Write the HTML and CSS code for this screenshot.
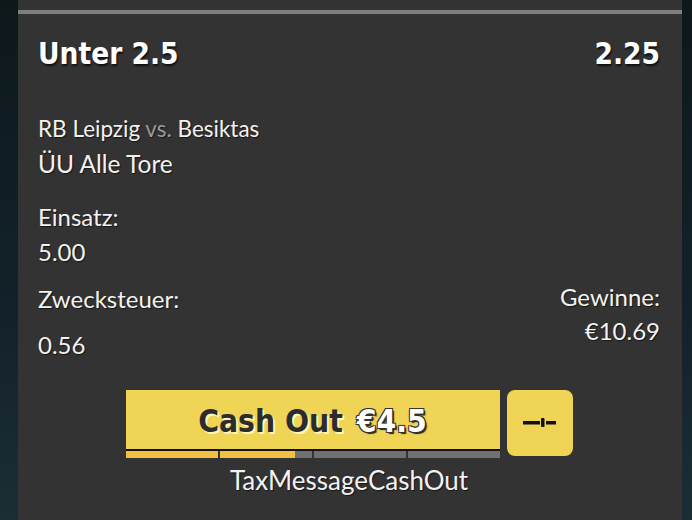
FILE: index.html
```html
<!DOCTYPE html>
<html lang="de">
<head>
<meta charset="utf-8">
<link rel="stylesheet" href="styles.css">
</head>
<body>
<div class="card">
  <div class="topline"></div>
  <div class="content">
    <div class="header">
      <span class="sel">Unter 2.5</span>
      <span class="odds">2.25</span>
    </div>
    <div class="event">RB Leipzig <span class="vs">vs.</span> Besiktas</div>
    <div class="market">ÜU Alle Tore</div>
    <div class="label l-stake">Einsatz:</div>
    <div class="value v-stake">5.00</div>
    <div class="row">
      <div class="col left">
        <div class="label l-tax">Zwecksteuer:</div>
        <div class="value v-tax">0.56</div>
      </div>
      <div class="col right">
        <div class="label l-win">Gewinne:</div>
        <div class="value v-win">€10.69</div>
      </div>
    </div>
    <div class="cashout">
      <div class="cash-main">
        <div class="cash-btn"><span class="c-dark">Cash Out</span><span class="c-amt">€4.5</span></div>
        <div class="progress">
          <div class="seg"><div class="fill full"></div></div>
          <div class="seg"><div class="fill part"></div></div>
          <div class="seg"></div>
          <div class="seg"></div>
        </div>
      </div>
      <div class="slider-btn">
        <svg width="34" height="10" viewBox="0 0 34 10">
          <rect x="0" y="3" width="17" height="3.5" fill="#111"/>
          <rect x="18" y="0" width="3.5" height="9" rx="1" fill="#111"/>
          <rect x="23" y="3" width="10" height="3.5" fill="#111"/>
        </svg>
      </div>
    </div>
    <div class="taxmsg">TaxMessageCashOut</div>
  </div>
</div>
</body>
</html>
```
FILE: styles.css
```css
html, body {
  margin: 0;
  padding: 0;
}
body {
  width: 692px;
  height: 520px;
  overflow: hidden;
  background: linear-gradient(180deg, #0d181b 0%, #13222a 60%, #1c2d34 100%);
  font-family: "Lato", "DejaVu Sans", sans-serif;
  color: #f2f2f2;
}
.card {
  margin-left: 18px;
  width: 664px;
  height: 520px;
  background: #333333;
  padding-top: 10px;
  box-sizing: border-box;
}
.topline {
  height: 4px;
  background: #7f7f7f;
}
.content {
  padding: 0 22px 0 20px;
  text-shadow: 1px 1px 1px rgba(0,0,0,0.6);
}
.header {
  display: flex;
  justify-content: space-between;
  font-family: "DejaVu Sans Condensed", "DejaVu Sans", sans-serif;
  font-weight: bold;
  font-size: 29.5px;
  line-height: 34px;
  margin-top: 23px;
  color: #fff;
  text-shadow: 1px 2px 2px rgba(0,0,0,0.7);
}
.event {
  font-size: 22.5px;
  line-height: 28px;
  margin-top: 44px;
}
.vs {
  color: #9a9a9a;
}
.market {
  font-size: 24.5px;
  line-height: 30px;
  margin-top: 6px;
}
.label, .value {
  font-size: 24px;
  line-height: 28px;
}
.l-stake { margin-top: 24px; }
.v-stake { margin-top: 7px; }
.row {
  display: flex;
  justify-content: space-between;
  margin-top: 17px;
}
.left { padding-top: 2px; }
.v-tax { margin-top: 18px; }
.right { text-align: right; }
.v-win { margin-top: 6px; }
.cashout {
  display: flex;
  justify-content: center;
  gap: 7px;
  margin-top: 31px;
}
.cash-main {
  width: 374px;
}
.cash-btn {
  height: 61px;
  background: #f0d455;
  border-bottom: 2px solid #111;
  display: flex;
  align-items: center;
  justify-content: center;
  font-family: "DejaVu Sans Condensed", "DejaVu Sans", sans-serif;
  font-weight: bold;
  font-size: 31.5px;
  gap: 14px;
  padding-top: 3px;
  box-sizing: border-box;
  text-shadow: none;
}
.c-dark {
  color: #2c2c2c;
  text-shadow: 2px 2px 0 #fff6c0;
}
.c-amt {
  color: #ffffff;
  text-shadow: 1px 1px 0 #333, -1px -1px 0 #333, 1px -1px 0 #333, -1px 1px 0 #333, 2px 2px 1px #222;
}
.progress {
  display: flex;
  gap: 2px;
  height: 7px;
}
.seg {
  flex: 1;
  background: #707070;
}
.fill {
  height: 100%;
  background: #f2c043;
}
.fill.full { width: 100%; }
.fill.part { width: 82%; }
.slider-btn {
  width: 66px;
  height: 66px;
  border-radius: 8px;
  background: #f0d455;
  display: flex;
  align-items: center;
  justify-content: center;
}
.taxmsg {
  text-align: center;
  font-size: 26px;
  line-height: 30px;
  margin-top: 7px;
}
```
